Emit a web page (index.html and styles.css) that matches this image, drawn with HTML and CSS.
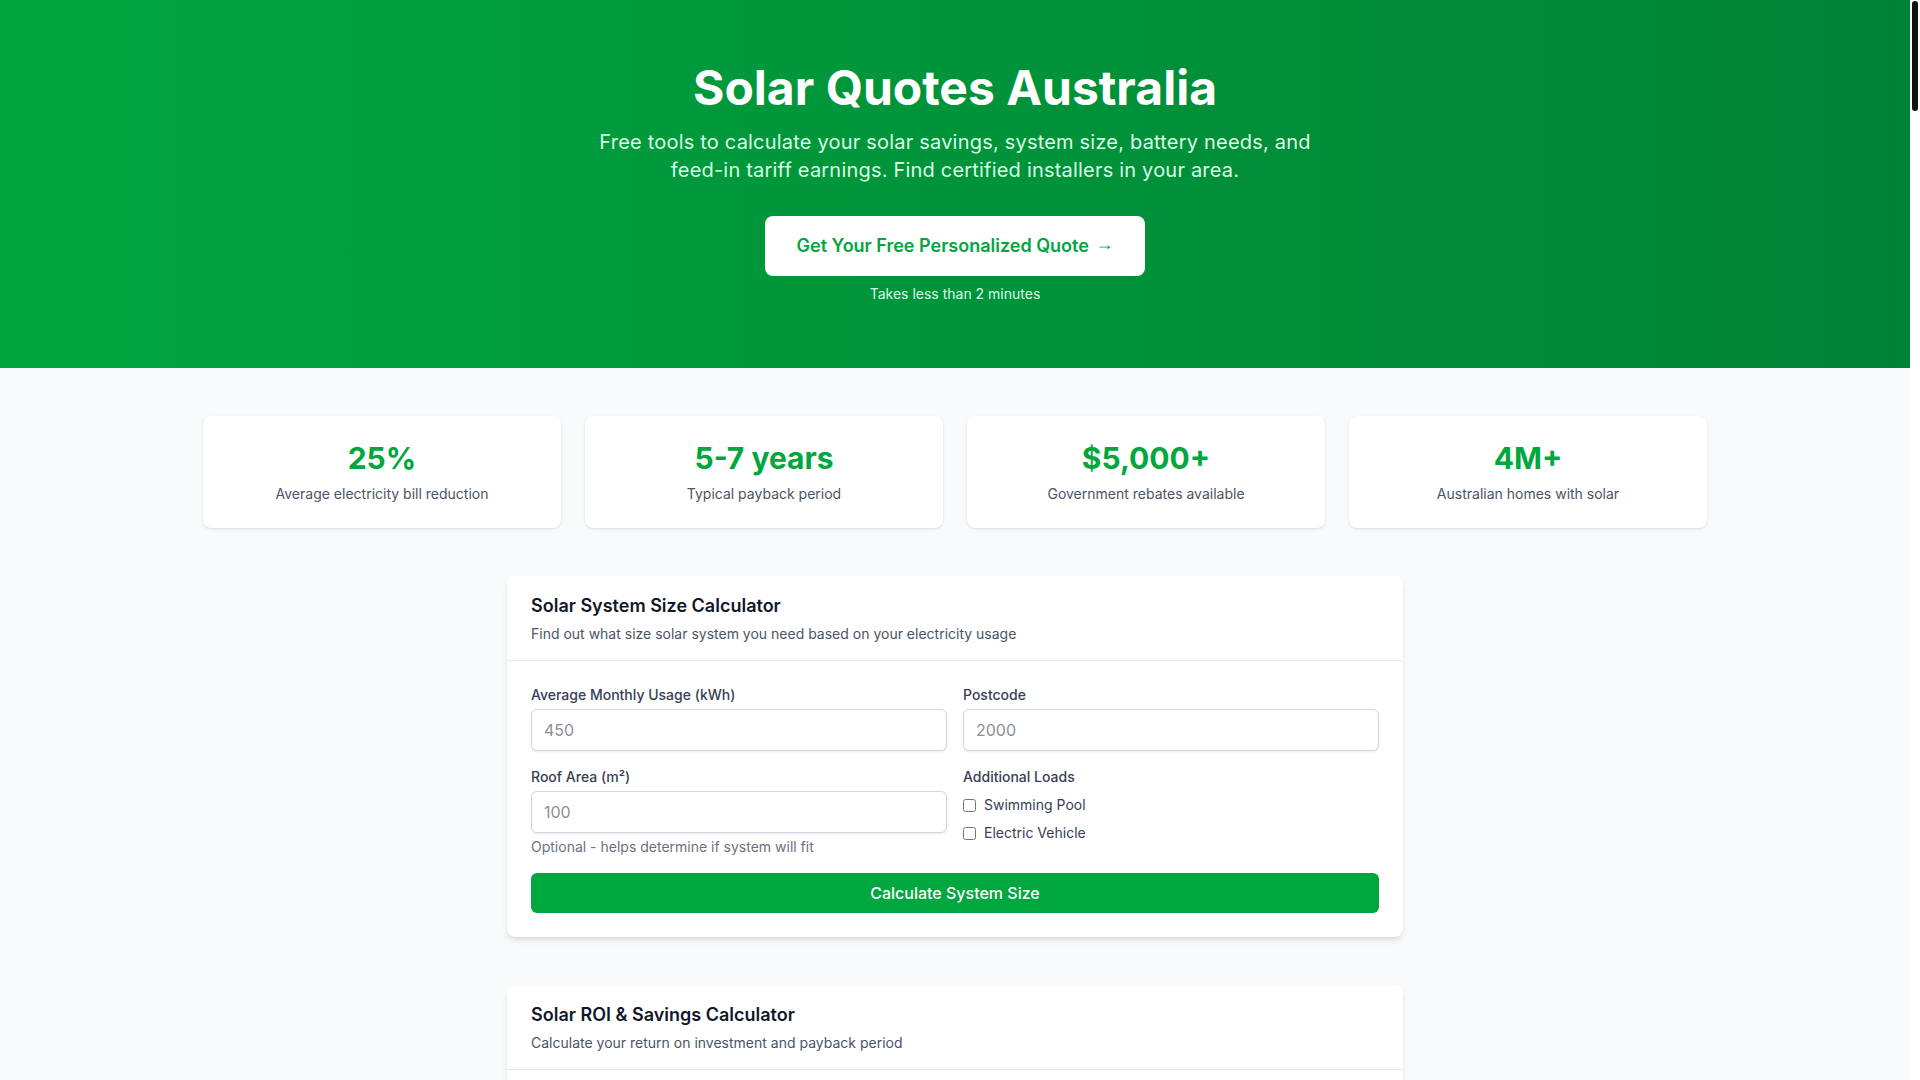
FILE: index.html
```html
<!DOCTYPE html>
<html lang="en">
<head>
  <meta charset="UTF-8">
  <meta name="viewport" content="width=device-width, initial-scale=1.0">
  <title>Solar Quotes Australia</title>
  <link rel="stylesheet" href="styles.css">
</head>
<body>
  <div class="page">
  <div class="scroller">
  <header class="hero">
    <div class="container">
      <h1>Solar Quotes Australia</h1>
      <p class="hero-lead">
        Free tools to calculate your solar savings, system size, battery needs, and
        feed-in tariff earnings. Find certified installers in your area.
      </p>
      <a class="quote-btn" href="#quote">Get Your Free Personalized Quote <span class="arrow">→</span></a>
      <p class="hero-note">Takes less than 2 minutes</p>
    </div>
  </header>

  <main class="container">
    <section class="stats">
      <div class="stat">
        <div class="stat-value">25%</div>
        <div class="stat-label">Average electricity bill reduction</div>
      </div>
      <div class="stat">
        <div class="stat-value">5-7 years</div>
        <div class="stat-label">Typical payback period</div>
      </div>
      <div class="stat">
        <div class="stat-value">$5,000+</div>
        <div class="stat-label">Government rebates available</div>
      </div>
      <div class="stat">
        <div class="stat-value">4M+</div>
        <div class="stat-label">Australian homes with solar</div>
      </div>
    </section>

    <section class="tools">
      <article class="card" id="size">
        <div class="card-head">
          <h2>Solar System Size Calculator</h2>
          <p>Find out what size solar system you need based on your electricity usage</p>
        </div>
        <form class="card-body">
          <div class="grid">
            <div class="field">
              <label for="usage">Average Monthly Usage (kWh)</label>
              <input id="usage" type="number" placeholder="450">
            </div>
            <div class="field">
              <label for="postcode">Postcode</label>
              <input id="postcode" type="text" placeholder="2000">
            </div>
            <div class="field">
              <label for="roof">Roof Area (m²)</label>
              <input id="roof" type="number" placeholder="100">
              <small>Optional - helps determine if system will fit</small>
            </div>
            <div class="field">
              <span class="label">Additional Loads</span>
              <div class="checks">
                <label class="check"><input type="checkbox"> Swimming Pool</label>
                <label class="check"><input type="checkbox"> Electric Vehicle</label>
              </div>
            </div>
          </div>
          <button type="button" class="calc-btn">Calculate System Size</button>
        </form>
      </article>

      <article class="card" id="roi">
        <div class="card-head">
          <h2>Solar ROI &amp; Savings Calculator</h2>
          <p>Calculate your return on investment and payback period</p>
        </div>
        <form class="card-body">
          <div class="grid">
            <div class="field">
              <label for="bill">Quarterly Electricity Bill ($)</label>
              <input id="bill" type="number" placeholder="500">
            </div>
            <div class="field">
              <label for="system">System Size (kW)</label>
              <input id="system" type="number" placeholder="6.6">
            </div>
            <div class="field">
              <label for="cost">System Cost ($)</label>
              <input id="cost" type="number" placeholder="6000">
            </div>
            <div class="field">
              <label for="rate">Electricity Rate (c/kWh)</label>
              <input id="rate" type="number" placeholder="30">
            </div>
          </div>
          <button type="button" class="calc-btn">Calculate Savings</button>
        </form>
      </article>

      <article class="card" id="battery">
        <div class="card-head">
          <h2>Battery Storage Calculator</h2>
          <p>Work out what battery capacity suits your evening usage</p>
        </div>
        <form class="card-body">
          <div class="grid">
            <div class="field">
              <label for="evening">Evening Usage (kWh/day)</label>
              <input id="evening" type="number" placeholder="8">
            </div>
            <div class="field">
              <label for="backup">Backup Hours Needed</label>
              <input id="backup" type="number" placeholder="4">
            </div>
          </div>
          <button type="button" class="calc-btn">Calculate Battery Size</button>
        </form>
      </article>

      <article class="card" id="quote">
        <div class="card-head">
          <h2>Find Certified Installers</h2>
          <p>Compare up to 3 quotes from CEC accredited installers near you</p>
        </div>
        <form class="card-body">
          <div class="grid">
            <div class="field">
              <label for="name">Full Name</label>
              <input id="name" type="text" placeholder="Jane Smith">
            </div>
            <div class="field">
              <label for="email">Email</label>
              <input id="email" type="email" placeholder="jane@example.com">
            </div>
          </div>
          <button type="button" class="calc-btn">Get My Quotes</button>
        </form>
      </article>
    </section>
  </main>

  <footer class="footer">
    <p>© Solar Quotes Australia. Estimates only, actual savings vary by location and usage.</p>
  </footer>
  </div>

  <!-- page scrollbar, drawn since the capture hides the native one -->
  <div class="rail" aria-hidden="true"><div class="thumb"></div></div>
  </div>
</body>
</html>
```

FILE: styles.css
```css
/* Reset */

*, *::before, *::after {
  box-sizing: border-box;
  margin: 0;
  padding: 0;
}

html, body {
  height: 100%;
  overflow: hidden;
}

body {
  font-family: Inter, "Noto Sans", sans-serif;
  line-height: 1.5;
  color: #101828;
  background: #f9fafb;
}

/* Layout */

.page {
  display: flex;
  height: 100vh;
}

.scroller {
  flex: 1;
  min-width: 0;
  overflow-y: auto;
  scrollbar-width: none;
}

.scroller::-webkit-scrollbar {
  display: none;
}

.rail {
  width: 10px;
  flex: none;
  background: #fff;
  padding: 1px 2px;
}

.thumb {
  height: 110px;
  background: #111;
  border-radius: 3px;
}

.container {
  max-width: 1536px;
  margin: 0 auto;
  padding: 0 16px;
}

/* Hero */

.hero {
  background: linear-gradient(to right, #00a63e, #008236);
  color: #fff;
  text-align: center;
  padding: 64px 0;
}

.hero h1 {
  font-size: 48px;
  line-height: 1;
  font-weight: 700;
  margin-bottom: 16px;
}

.hero-lead {
  font-size: 20px;
  line-height: 28px;
  letter-spacing: 0.2px;
  color: #dcfce7;
  max-width: 768px;
  padding: 0 16px;
  margin: 0 auto 32px;
}

.quote-btn {
  display: inline-block;
  background: #fff;
  color: #00a63e;
  font-size: 18px;
  line-height: 28px;
  font-weight: 600;
  text-decoration: none;
  padding: 16px 32px;
  border-radius: 8px;
}

.quote-btn .arrow {
  font-family: "Noto Sans", sans-serif;
  font-weight: 400;
  line-height: 1;
  margin-left: 2px;
  position: relative;
  top: -2px;
}

.hero-note {
  font-size: 14px;
  line-height: 20px;
  color: #dcfce7;
  margin-top: 8px;
}

/* Stats */

.stats {
  display: grid;
  grid-template-columns: repeat(4, 1fr);
  gap: 24px;
  padding: 48px 0;
}

.stat {
  background: #fff;
  border-radius: 8px;
  box-shadow: 0 1px 3px 0 rgb(0 0 0 / 0.1), 0 1px 2px -1px rgb(0 0 0 / 0.1);
  padding: 24px;
  text-align: center;
}

.stat-value {
  font-size: 30px;
  line-height: 36px;
  font-weight: 700;
  color: #00a63e;
  margin-bottom: 8px;
}

.stat-label {
  font-size: 14px;
  line-height: 20px;
  color: #4a5565;
}

/* Calculators */

.tools {
  max-width: 896px;
  margin: 0 auto;
  display: flex;
  flex-direction: column;
  gap: 48px;
  padding-bottom: 64px;
}

.card {
  background: #fff;
  border-radius: 8px;
  box-shadow: 0 4px 6px -1px rgb(0 0 0 / 0.1), 0 2px 4px -2px rgb(0 0 0 / 0.1);
}

.card-head {
  padding: 16px 24px;
  border-bottom: 1px solid #e5e7eb;
}

.card-head h2 {
  font-size: 18px;
  line-height: 28px;
  font-weight: 600;
  color: #101828;
}

.card-head p {
  font-size: 14px;
  line-height: 20px;
  color: #4a5565;
  margin-top: 4px;
}

.card-body {
  padding: 24px;
  display: flex;
  flex-direction: column;
  gap: 16px;
}

.grid {
  display: grid;
  grid-template-columns: 1fr 1fr;
  gap: 16px;
}

.field label,
.field .label {
  display: block;
  font-size: 14px;
  line-height: 20px;
  font-weight: 500;
  color: #364153;
  margin-bottom: 4px;
}

.field input[type="number"],
.field input[type="text"],
.field input[type="email"] {
  display: block;
  width: 100%;
  font: inherit;
  font-size: 16px;
  line-height: 24px;
  color: #101828;
  padding: 8px 12px;
  border: 1px solid #d1d5dc;
  border-radius: 6px;
  box-shadow: 0 1px 2px 0 rgb(0 0 0 / 0.08);
  background: #fff;
  -moz-appearance: textfield;
}

.field input::-webkit-outer-spin-button,
.field input::-webkit-inner-spin-button {
  -webkit-appearance: none;
}

.field input::placeholder {
  color: #8b8f97;
}

.field small {
  display: block;
  font-size: 14px;
  line-height: 20px;
  color: #6a7282;
  margin-top: 4px;
}

.checks {
  display: flex;
  flex-direction: column;
  gap: 8px;
  margin-top: 8px;
}

.field .check {
  display: flex;
  align-items: center;
  gap: 8px;
  font-weight: 400;
  margin: 0;
}

.check input {
  width: 13px;
  height: 13px;
}

.calc-btn {
  font: inherit;
  font-size: 16px;
  line-height: 24px;
  font-weight: 500;
  color: #fff;
  background: #00a63e;
  border: 0;
  border-radius: 6px;
  padding: 8px 16px;
  width: 100%;
}

.footer {
  text-align: center;
  font-size: 14px;
  color: #6a7282;
  padding: 32px 16px;
}
```
